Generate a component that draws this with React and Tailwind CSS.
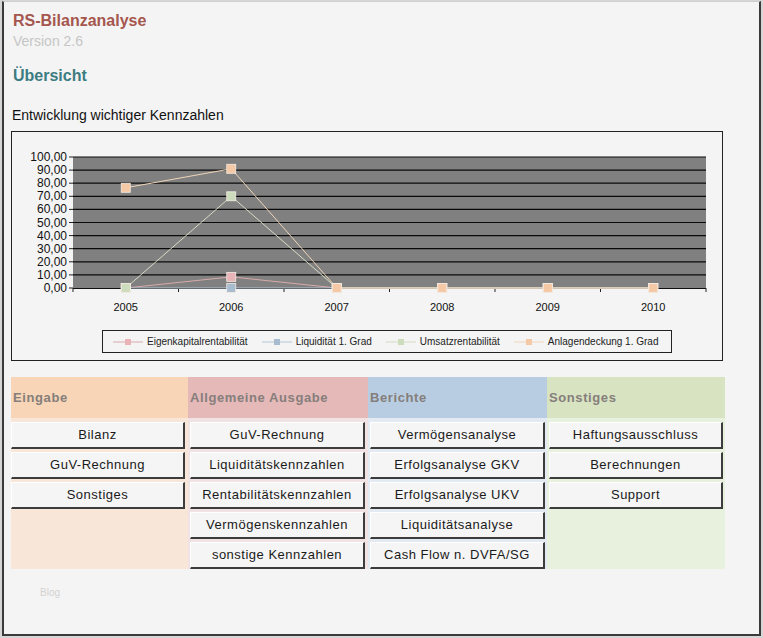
import React from 'react';

const years = [2005, 2006, 2007, 2008, 2009, 2010];
const xs = years.map((_, i) => 73 + 105.5 * i + 52.75);
const yOf = (v) => 288 - v * 1.31;

// chart series, drawn in this order (last on top)
const series = [
  { name: 'Eigenkapitalrentabilität', line: '#d8aaaa', fill: '#e8b4b8', values: [0, 8.5, 0, 0, 0, 0] },
  { name: 'Liquidität 1. Grad', line: '#b4c4d4', fill: '#a8bccf', values: [0, 0, 0, 0, 0, 0] },
  { name: 'Umsatzrentabilität', line: '#d4dcc4', fill: '#cddcbc', values: [0, 70, 0, 0, 0, 0] },
  { name: 'Anlagendeckung 1. Grad', line: '#f0d4b8', fill: '#f6c9a6', values: [76.5, 91, 0, 0, 0, 0] },
];

const columns = [
  {
    title: 'Eingabe',
    head: 'bg-[#f7d5b6]',
    body: 'bg-[#f8e7d9]',
    width: 'w-[177px]',
    pad: 'pl-0',
    btnW: 'w-[174px]',
    items: ['Bilanz', 'GuV-Rechnung', 'Sonstiges'],
  },
  {
    title: 'Allgemeine Ausgabe',
    head: 'bg-[#e6b9b9]',
    body: 'bg-[#f1e3e3]',
    width: 'w-[180px]',
    pad: 'pl-[2px]',
    btnW: 'w-[175px]',
    items: ['GuV-Rechnung', 'Liquiditätskennzahlen', 'Rentabilitätskennzahlen', 'Vermögenskennzahlen', 'sonstige Kennzahlen'],
  },
  {
    title: 'Berichte',
    head: 'bg-[#b9cde2]',
    body: 'bg-[#e3eaf1]',
    width: 'w-[179px]',
    pad: 'pl-[2px]',
    btnW: 'w-[175px]',
    items: ['Vermögensanalyse', 'Erfolgsanalyse GKV', 'Erfolgsanalyse UKV', 'Liquiditätsanalyse', 'Cash Flow n. DVFA/SG'],
  },
  {
    title: 'Sonstiges',
    head: 'bg-[#d8e3c2]',
    body: 'bg-[#e8f0de]',
    width: 'w-[178px]',
    pad: 'pl-[2px]',
    btnW: 'w-[174px]',
    items: ['Haftungsausschluss', 'Berechnungen', 'Support'],
  },
];

const Chart = () => (
  <svg width="710" height="198" className="block">
    <g transform="translate(-12,-132)" fontFamily="'Liberation Sans', Arial, sans-serif">
      <rect x="73" y="157" width="633" height="131" fill="#808080" />
      {Array.from({ length: 11 }, (_, k) => {
        const y = 288 - k * 13.1;
        return (
          <g key={k}>
            {k > 0 && <line x1="73" x2="706" y1={y} y2={y} stroke="#0a0a0a" strokeWidth="1.2" />}
            <line x1="69" x2="73" y1={y} y2={y} stroke="#222" strokeWidth="1" />
            <text x="67" y={y + 4} fontSize="12" textAnchor="end" fill="#111">
              {(k * 10).toFixed(2).replace('.', ',')}
            </text>
          </g>
        );
      })}
      <line x1="73" x2="706" y1="288.5" y2="288.5" stroke="#111" strokeWidth="1" />
      {Array.from({ length: 7 }, (_, i) => (
        <line key={i} x1={73 + 105.5 * i} x2={73 + 105.5 * i} y1="288" y2="292" stroke="#222" strokeWidth="1" />
      ))}
      {years.map((yr, i) => (
        <text key={yr} x={xs[i]} y="311" fontSize="11" textAnchor="middle" fill="#111">
          {yr}
        </text>
      ))}
      {series.map((s) => (
        <g key={s.name}>
          <polyline
            points={s.values.map((v, i) => `${xs[i]},${yOf(v)}`).join(' ')}
            fill="none"
            stroke={s.line}
            strokeWidth="1"
          />
          {s.values.map((v, i) => (
            <rect key={i} x={xs[i] - 4.5} y={yOf(v) - 4.5} width="9" height="9" fill={s.fill} stroke="#f4ece4" strokeWidth="0.8" />
          ))}
        </g>
      ))}
    </g>
  </svg>
);

const LegendKey = ({ line, fill }) => (
  <svg width="30" height="8" className="block shrink-0">
    <line x1="0" x2="30" y1="4" y2="4" stroke={line} strokeWidth="1" />
    <rect x="12" y="1" width="6" height="6" fill={fill} />
  </svg>
);

const App = () => {
  return (
    <div className="w-[763px] h-[638px] bg-[#d6d6d6] overflow-hidden font-['Liberation_Sans',Arial,sans-serif]">
      <div className="ml-[2px] mt-[1px] w-[759px] h-[635px] bg-[#f4f4f4] border-l-2 border-r-2 border-b-2 border-[#3a3a3a] border-t border-t-[#cfcfcf] pl-[7px] pt-[10px]">
        {/* Header */}
        <div className="pl-[2px]">
          <div className="h-[18px] leading-[18px] text-[16px] font-bold text-[#a5564e]">RS-Bilanzanalyse</div>
          <div className="mt-[2px] h-[18px] leading-[18px] text-[14px] text-[#c6c6c6]">Version 2.6</div>
          <div className="mt-[16px] h-[20px] leading-[20px] text-[16px] font-bold text-[#3d7c83]">Übersicht</div>
        </div>
        <div className="mt-[21px] pl-px h-[16px] leading-[16px] text-[14px] text-[#111]">Entwicklung wichtiger Kennzahlen</div>

        {/* Chart */}
        <div className="mt-[8px] w-[712px] h-[230px] border border-[#222] bg-[#f4f4f4]">
          <Chart />
          <div className="ml-[90px] w-[570px] h-[23px] border border-[#222] flex items-center pl-[10px] gap-[14px] text-[10px] text-[#222]">
            {series.map((s) => (
              <div key={s.name} className="flex items-center gap-[4px] whitespace-nowrap">
                <LegendKey line={s.line} fill={s.fill} />
                <span>{s.name}</span>
              </div>
            ))}
          </div>
        </div>

        {/* Navigation */}
        <div className="mt-[16px] flex">
          {columns.map((col) => (
            <div key={col.title} className={`${col.width} h-[192px] flex flex-col`}>
              <div className={`${col.head} h-[41px] flex items-center pl-[2px] text-[13px] font-bold tracking-[0.6px] text-[#857e7b]`}>
                {col.title}
              </div>
              <div className={`${col.body} flex-1 ${col.pad} pt-[4px] flex flex-col gap-[3px]`}>
                {col.items.map((item) => (
                  <button
                    key={item}
                    className={`${col.btnW} h-[27px] bg-[#f5f5f5] border-t border-l border-t-white border-l-white border-r-2 border-b-2 border-r-[#3c3c3c] border-b-[#3c3c3c] text-[13px] tracking-[0.5px] text-[#1a1a1a] flex items-center justify-center whitespace-nowrap`}
                  >
                    {item}
                  </button>
                ))}
              </div>
            </div>
          ))}
        </div>

        <div className="mt-[16px] pl-[29px] text-[10px] text-[#d2d2d2]">Blog</div>
      </div>
    </div>
  );
};

export default App;
